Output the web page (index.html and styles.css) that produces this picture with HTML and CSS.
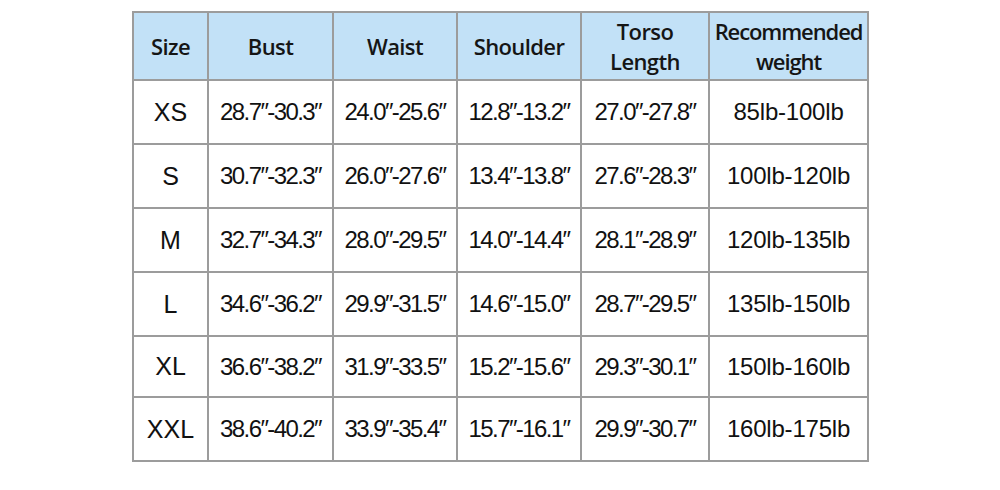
FILE: index.html
```html
<!DOCTYPE html>
<html>
<head>
<meta charset="utf-8">
<link rel="stylesheet" href="styles.css">
</head>
<body>
<div class="page">
<table class="chart">
  <colgroup>
    <col class="c-size"><col class="c-bust"><col class="c-waist"><col class="c-shoulder"><col class="c-torso"><col class="c-weight">
  </colgroup>
  <thead>
    <tr class="head">
      <th>Size</th><th>Bust</th><th>Waist</th><th>Shoulder</th><th>Torso<br>Length</th><th class="rec">Recommended<br>weight</th>
    </tr>
  </thead>
  <tbody>
    <tr><td class="sz">XS</td><td class="m">28.7″-30.3″</td><td class="m">24.0″-25.6″</td><td class="m">12.8″-13.2″</td><td class="m">27.0″-27.8″</td><td class="w">85lb-100lb</td></tr>
    <tr><td class="sz">S</td><td class="m">30.7″-32.3″</td><td class="m">26.0″-27.6″</td><td class="m">13.4″-13.8″</td><td class="m">27.6″-28.3″</td><td class="w">100lb-120lb</td></tr>
    <tr><td class="sz">M</td><td class="m">32.7″-34.3″</td><td class="m">28.0″-29.5″</td><td class="m">14.0″-14.4″</td><td class="m">28.1″-28.9″</td><td class="w">120lb-135lb</td></tr>
    <tr><td class="sz">L</td><td class="m">34.6″-36.2″</td><td class="m">29.9″-31.5″</td><td class="m">14.6″-15.0″</td><td class="m">28.7″-29.5″</td><td class="w">135lb-150lb</td></tr>
    <tr class="short"><td class="sz">XL</td><td class="m">36.6″-38.2″</td><td class="m">31.9″-33.5″</td><td class="m">15.2″-15.6″</td><td class="m">29.3″-30.1″</td><td class="w">150lb-160lb</td></tr>
    <tr><td class="sz">XXL</td><td class="m">38.6″-40.2″</td><td class="m">33.9″-35.4″</td><td class="m">15.7″-16.1″</td><td class="m">29.9″-30.7″</td><td class="w">160lb-175lb</td></tr>
  </tbody>
</table>
</div>
</body>
</html>
```
FILE: styles.css
```css
html, body {
  margin: 0;
  padding: 0;
  background: #ffffff;
}
.page {
  width: 1000px;
  height: 490px;
  padding: 11px 0 0 132px;
  box-sizing: border-box;
}
.chart {
  border-collapse: collapse;
  table-layout: fixed;
  width: 735px;
}
.c-size { width: 75px; }
.c-bust { width: 125px; }
.c-waist { width: 124px; }
.c-shoulder { width: 124px; }
.c-torso { width: 128px; }
.c-weight { width: 159px; }
.chart th, .chart td {
  border: 2px solid #9c9c9c;
  text-align: center;
  vertical-align: middle;
  padding: 0;
  color: #111111;
  white-space: nowrap;
}
.head {
  height: 68px;
}
.chart th {
  background: #c2e1f7;
  font-family: "Open Sans", "Noto Sans", sans-serif;
  font-weight: 600;
  font-size: 22px;
  line-height: 30px;
  letter-spacing: -0.6px;
  color: #151515;
}
.chart th.rec {
  letter-spacing: -1.1px;
}
.chart tbody tr {
  height: 64px;
}
.chart tbody tr.short {
  height: 61px;
}
.chart td {
  font-family: "Liberation Sans", Arial, sans-serif;
  font-size: 24px;
}
.chart td.sz {
  font-size: 25px;
}
.chart td.m {
  letter-spacing: -1.6px;
}
.chart td.w {
  letter-spacing: -0.2px;
}
```
